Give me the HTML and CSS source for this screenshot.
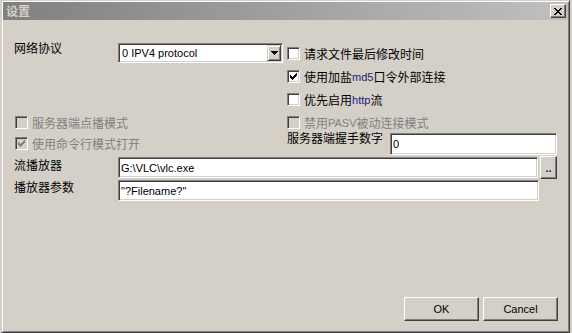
FILE: index.html
```html
<!DOCTYPE html>
<html lang="zh-CN">
<head>
    <meta charset="UTF-8">
    <meta name="viewport" content="width=device-width, initial-scale=1.0">
    <title>设置</title>
    <link rel="stylesheet" href="styles.css">
</head>
<body>
    <div class="window">
        <div class="titlebar">
            <span class="title">设置</span>
            <button class="close" aria-label="关闭">
                <svg width="8" height="7" viewBox="0 0 8 7" shape-rendering="crispEdges"><path d="M0 0h2v1h-2z M6 0h2v1h-2z M1 1h2v1h-2z M5 1h2v1h-2z M2 2h4v1h-4z M3 3h2v1h-2z M2 4h4v1h-4z M1 5h2v1h-2z M5 5h2v1h-2z M0 6h2v1h-2z M6 6h2v1h-2z" fill="#000"/></svg>
            </button>
        </div>

        <div class="form">
            <!-- row 1 -->
            <div class="label">网络协议</div>
            <div class="combo sunken">
                <span class="combo-text">0 IPV4 protocol</span>
                <span class="combo-btn">
                    <svg width="7" height="4" viewBox="0 0 7 4" shape-rendering="crispEdges"><path d="M0 0h7v1h-1v1h-1v1h-1v1h-1v-1h-1v-1h-1v-1h-1z" fill="#000"/></svg>
                </span>
            </div>
            <label class="check">
                <span class="box"></span>请求文件最后修改时间
            </label>

            <!-- row 2 -->
            <label class="check right">
                <span class="box"><svg width="9" height="9" viewBox="0 0 9 9" shape-rendering="crispEdges"><path d="M1 3h1v1h1v1h1v-1h1v-1h1v-1h1v-1h1v3h-1v1h-1v1h-1v1h-1v1h-1v-1h-1v-1h-1z"/></svg></span>使用加盐<span class="latin">md5</span>口令外部连接
            </label>

            <!-- row 3 -->
            <label class="check right">
                <span class="box"></span>优先启用<span class="latin">http</span>流
            </label>

            <!-- row 4 -->
            <label class="check span2 disabled">
                <span class="box"></span>服务器端点播模式
            </label>
            <label class="check disabled">
                <span class="box"></span>禁用<span class="latin">PASV</span>被动连接模式
            </label>

            <!-- row 5 -->
            <label class="check span2 disabled">
                <span class="box"><svg width="9" height="9" viewBox="0 0 9 9" shape-rendering="crispEdges"><path d="M1 3h1v1h1v1h1v-1h1v-1h1v-1h1v-1h1v3h-1v1h-1v1h-1v1h-1v1h-1v-1h-1v-1h-1z"/></svg></span>使用命令行模式打开
            </label>
            <div class="shake">
                <div class="label shake-label">服务器端握手数字</div>
                <input class="field sunken shake-field" type="text" value="0">
            </div>

            <!-- row 6 -->
            <div class="label low">流播放器</div>
            <div class="path-row">
                <input class="field sunken wide" type="text" value="G:\VLC\vlc.exe">
                <button class="btn browse">..</button>
            </div>

            <!-- row 7 -->
            <div class="label low">播放器参数</div>
            <div class="path-row">
                <input class="field sunken wide lower" type="text" value="&quot;?Filename?&quot;">
            </div>
        </div>

        <div class="footer">
            <button class="btn action">OK</button>
            <button class="btn action">Cancel</button>
        </div>
    </div>
</body>
</html>
```

FILE: styles.css
```css
body {
    margin: 0;
    background-color: #d4d0c8;
    font-family: "Liberation Sans", "Noto Sans CJK SC", sans-serif;
    font-size: 12px;
    color: #000;
}

.window {
    box-sizing: border-box;
    width: 569px;
    height: 333px;
    margin-left: 1px;
    padding: 1px;
    display: flex;
    flex-direction: column;
    background-color: #d4d0c8;
    border: 1px solid;
    border-color: #d4d0c8 #404040 #404040 #d4d0c8;
    box-shadow: inset 1px 1px #fff, inset -1px -1px #808080;
}

/* title bar */
.titlebar {
    height: 18px;
    display: flex;
    align-items: center;
    justify-content: space-between;
    background: linear-gradient(to right, #808080, #c0c0c0);
}

.title {
    padding-left: 3px;
    font-family: "Noto Sans CJK SC", sans-serif;
    font-weight: bold;
    font-size: 12px;
    line-height: 18px;
    color: #d4d0c8;
}

.close {
    box-sizing: border-box;
    width: 16px;
    height: 14px;
    margin-right: 2px;
    padding: 0;
    display: flex;
    align-items: center;
    justify-content: center;
    background-color: #d4d0c8;
    border: 1px solid;
    border-color: #fff #404040 #404040 #fff;
    box-shadow: inset -1px -1px #808080;
}

/* form grid */
.form {
    display: grid;
    grid-template-columns: 100px 165px 270px;
    grid-template-rows: 23px 23px 23px 21px 23px 22px 22px;
    column-gap: 4px;
    padding: 23px 0 0 11px;
}

.label {
    font-family: "Noto Sans CJK SC", sans-serif;
    line-height: 14px;
    margin-top: -2px;
    white-space: nowrap;
}

.label.low {
    margin-top: 2px;
}

.sunken {
    box-sizing: border-box;
    border: 1px solid;
    border-color: #808080 #fff #fff #808080;
    box-shadow: inset 1px 1px #404040, inset -1px -1px #d4d0c8;
    background-color: #fff;
}

.combo {
    height: 20px;
    padding: 1px;
    display: flex;
    align-items: stretch;
}

.combo-text {
    flex: 1;
    padding-left: 2px;
    font-size: 11px;
    line-height: 16px;
}

.combo-btn {
    box-sizing: border-box;
    width: 14px;
    display: flex;
    align-items: center;
    justify-content: center;
    background-color: #d4d0c8;
    border: 1px solid;
    border-color: #d4d0c8 #404040 #404040 #d4d0c8;
    box-shadow: inset 1px 1px #fff, inset -1px -1px #808080;
}

/* checkboxes */
.check {
    height: 21px;
    display: flex;
    align-items: center;
    font-family: "Noto Sans CJK SC", sans-serif;
    line-height: 14px;
    white-space: nowrap;
}

.check.right {
    grid-column: 3;
}

.check.span2 {
    grid-column: 1 / 3;
    padding-left: 1px;
}

.box {
    box-sizing: border-box;
    width: 13px;
    height: 13px;
    margin-right: 4px;
    padding: 1px;
    display: flex;
    align-items: center;
    justify-content: center;
    flex-shrink: 0;
    background-color: #fff;
    border: 1px solid;
    border-color: #808080 #fff #fff #808080;
    box-shadow: inset 1px 1px #404040, inset -1px -1px #d4d0c8;
}

.box svg {
    fill: #000;
}

.disabled {
    color: #808080;
}

.disabled .box {
    background-color: #d4d0c8;
}

.disabled .box svg {
    fill: #808080;
}

.latin {
    font-family: "Liberation Sans", sans-serif;
    font-size: 11px;
    color: #1c1c78;
}

.disabled .latin {
    color: #808080;
}

/* text fields */
.field {
    margin: 0;
    padding: 1px 2px;
    font-family: "Liberation Sans", sans-serif;
    font-size: 11px;
    color: #000;
    outline: none;
}

.shake {
    grid-column: 3;
    display: flex;
    align-items: flex-start;
}

.shake-label {
    width: 103px;
}

.shake-field {
    width: 167px;
    height: 22px;
}

.path-row {
    grid-column: 2 / 4;
    display: flex;
    align-items: flex-start;
}

.wide {
    width: 421px;
    height: 21px;
    margin-top: 1px;
}

.wide.lower {
    margin-top: 2px;
}

/* buttons */
.btn {
    box-sizing: border-box;
    padding: 0;
    background-color: #d4d0c8;
    border: 1px solid;
    border-color: #fff #404040 #404040 #fff;
    box-shadow: inset -1px -1px #808080;
    font-family: "Liberation Sans", sans-serif;
    font-size: 11px;
    color: #000;
}

.browse {
    width: 17px;
    height: 23px;
    margin-left: 2px;
    color: #1c1c78;
    font-weight: bold;
}

.footer {
    margin-top: auto;
    display: flex;
    justify-content: flex-end;
    gap: 4px;
    padding: 0 10px 10px 0;
}

.action {
    width: 75px;
    height: 24px;
}
```
